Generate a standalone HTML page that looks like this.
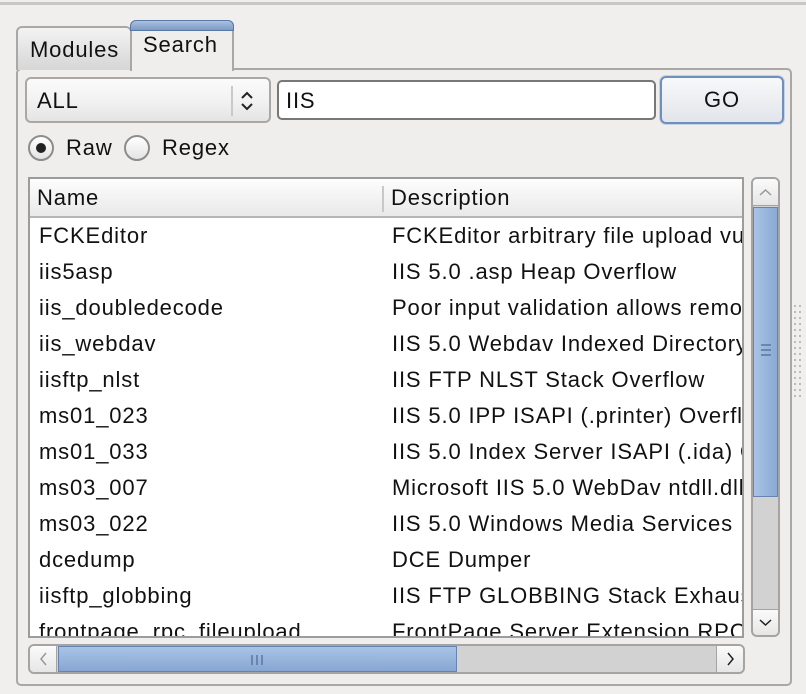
<!DOCTYPE html>
<html><head><meta charset="utf-8"><style>
*{box-sizing:border-box;margin:0;padding:0}
body{width:806px;height:694px;background:#f0efed;font-family:"Liberation Sans",sans-serif;font-size:22px;letter-spacing:0.85px;color:#111;position:relative;overflow:hidden}
.abs{position:absolute}
.topline{left:0;top:2px;width:806px;height:3px;background:#c8c7c5}
.pane{left:16px;top:68px;width:776px;height:618px;border:2px solid #a9a8a6;border-radius:5px;background:#efeeec}
.tab1{left:16px;top:26px;width:116px;height:44px;border:2px solid #a9a8a6;border-bottom:none;border-radius:6px 6px 0 0;background:linear-gradient(#f3f3f3,#d6d6d6)}
.tab1 span{position:absolute;left:12px;top:9px}
.tab2{left:130px;top:20px;width:104px;height:51px;border:2px solid #a9a8a6;border-top:none;border-bottom:none;border-radius:6px 6px 0 0;background:#efeeec}
.tab2:before{content:"";position:absolute;left:-2px;right:-2px;top:0;height:9px;border-radius:6px 6px 0 0;background:linear-gradient(#a9c2e2,#7e9ac2);border:1px solid #5a78a6}
.tab2 span{position:absolute;left:11px;top:12px}
.combo{left:25px;top:77px;width:246px;height:46px;border:2px solid #a9a8a6;border-radius:6px;background:linear-gradient(#fbfbfb 0%,#f2f2f2 50%,#e4e4e4 100%)}
.combo span{position:absolute;left:10px;top:9px}
.combo .sep{position:absolute;left:204px;top:7px;width:2px;height:30px;background:#c9c9c9}
.input{left:277px;top:80px;width:379px;height:40px;border:2px solid #777;border-radius:5px;background:#fff}
.input span{position:absolute;left:7px;top:6px}
.go{left:660px;top:76px;width:124px;height:48px;border:2px solid #6f8fbd;border-radius:6px;background:linear-gradient(#f7f8fa,#e2e5ea);box-shadow:0 0 0 1px #c3d2e6}
.go span{position:absolute;left:0;right:0;top:9px;text-align:center}
.radio{width:26px;height:26px;border-radius:50%;border:2px solid #8c8c8c;background:linear-gradient(#fff,#e4e4e4)}
.dot{position:absolute;left:6px;top:6px;width:10px;height:10px;border-radius:50%;background:#222}
.table{left:28px;top:177px;width:716px;height:461px;border:2px solid #9d9c9a;background:#fff;overflow:hidden}
.hdr{position:absolute;left:0;top:0;width:100%;height:39px;background:linear-gradient(#fdfdfd,#e9e9e9);border-bottom:2px solid #b5b5b5}
.hdr span{position:absolute;top:6px}
.hsep{position:absolute;left:352px;top:7px;width:2px;height:26px;background:#c8c8c8}
.row{position:absolute;left:0;height:36px;width:100%;white-space:nowrap}
.row .n{position:absolute;left:9px;top:4px}
.row .d{position:absolute;left:362px;top:4px}
.vs{left:751px;top:177px;width:29px;height:460px;border:2px solid #a5a4a2;border-radius:6px;background:#d2d2d2;overflow:hidden}
.vthumb{position:absolute;left:0;top:28px;width:25px;height:290px;background:linear-gradient(90deg,#a8c3e6,#8aaad4);border:1px solid #6784b0}
.hs{left:28px;top:644px;width:717px;height:30px;border:2px solid #a5a4a2;border-radius:6px;background:#d2d2d2;overflow:hidden}
.hthumb{position:absolute;left:28px;top:0;width:399px;height:26px;background:linear-gradient(#a8c3e6,#87a6d2);border:1px solid #6784b0}
.btn{position:absolute;background:linear-gradient(#fafafa,#e6e6e6)}
</style></head><body>
<div class="abs topline"></div>
<div class="abs pane"></div>
<div class="abs tab1"><span>Modules</span></div>
<div class="abs tab2"><span>Search</span></div>
<div class="abs combo"><span>ALL</span><div class="sep"></div>
<svg style="position:absolute;left:212px;top:9px" width="16" height="26" viewBox="0 0 16 26"><path d="M3 10 L8 5 L13 10 M3 16 L8 21 L13 16" fill="none" stroke="#222" stroke-width="2"/></svg></div>
<div class="abs input"><span>IIS</span></div>
<div class="abs go"><span>GO</span></div>
<div class="abs radio" style="left:28px;top:135px"><div class="dot"></div></div>
<span class="abs" style="left:66px;top:135px">Raw</span>
<div class="abs radio" style="left:124px;top:135px"></div>
<span class="abs" style="left:162px;top:135px">Regex</span>
<div class="abs table">
<div class="hdr"><span style="left:7px">Name</span><div class="hsep"></div><span style="left:361px">Description</span></div>
<div class="row" style="top:40px"><span class="n">FCKEditor</span><span class="d">FCKEditor arbitrary file upload vulnerability</span></div>
<div class="row" style="top:76px"><span class="n">iis5asp</span><span class="d">IIS 5.0 .asp Heap Overflow</span></div>
<div class="row" style="top:112px"><span class="n">iis_doubledecode</span><span class="d">Poor input validation allows remote</span></div>
<div class="row" style="top:148px"><span class="n">iis_webdav</span><span class="d">IIS 5.0 Webdav Indexed Directory</span></div>
<div class="row" style="top:184px"><span class="n">iisftp_nlst</span><span class="d">IIS FTP NLST Stack Overflow</span></div>
<div class="row" style="top:220px"><span class="n">ms01_023</span><span class="d">IIS 5.0 IPP ISAPI (.printer) Overflow</span></div>
<div class="row" style="top:256px"><span class="n">ms01_033</span><span class="d">IIS 5.0 Index Server ISAPI (.ida) Overflow</span></div>
<div class="row" style="top:292px"><span class="n">ms03_007</span><span class="d">Microsoft IIS 5.0 WebDav ntdll.dll</span></div>
<div class="row" style="top:328px"><span class="n">ms03_022</span><span class="d">IIS 5.0 Windows Media Services</span></div>
<div class="row" style="top:364px"><span class="n">dcedump</span><span class="d">DCE Dumper</span></div>
<div class="row" style="top:400px"><span class="n">iisftp_globbing</span><span class="d">IIS FTP GLOBBING Stack Exhaustion</span></div>
<div class="row" style="top:436px"><span class="n">frontpage_rpc_fileupload</span><span class="d">FrontPage Server Extension RPC</span></div>
</div>
<div class="abs vs">
<div class="btn" style="left:0;top:0;width:25px;height:27px;border-bottom:1px solid #a5a4a2"><svg width="25" height="27"><path d="M7 16 L12.5 11 L18 16" fill="none" stroke="#999" stroke-width="1.5"/></svg></div>
<div class="vthumb"><svg style="position:absolute;left:6px;top:134px" width="12" height="16"><path d="M1 3H11M1 8H11M1 13H11" stroke="#5a76a2" stroke-width="1.5"/></svg></div>
<div class="btn" style="left:0;top:430px;width:25px;height:26px;border-top:1px solid #a5a4a2"><svg width="25" height="26"><path d="M7 10 L12.5 15 L18 10" fill="none" stroke="#222" stroke-width="1.5"/></svg></div>
</div>
<div class="abs hs">
<div class="btn" style="left:0;top:0;width:27px;height:26px;border-right:1px solid #a5a4a2"><svg width="27" height="26"><path d="M16 7 L11 13 L16 19" fill="none" stroke="#999" stroke-width="1.5"/></svg></div>
<div class="hthumb"><svg style="position:absolute;left:191px;top:7px" width="14" height="12"><path d="M2 1V11M7 1V11M12 1V11" stroke="#5a76a2" stroke-width="1.5"/></svg></div>
<div class="btn" style="left:686px;top:0;width:27px;height:26px;border-left:1px solid #a5a4a2"><svg width="27" height="26"><path d="M11 7 L16 13 L11 19" fill="none" stroke="#222" stroke-width="1.5"/></svg></div>
</div>
<svg class="abs" style="left:793px;top:305px" width="12" height="95"><g fill="#bbb">
<rect x="1" y="0" width="2" height="2"/><rect x="6" y="0" width="2" height="2"/>
<rect x="1" y="6" width="2" height="2"/><rect x="6" y="6" width="2" height="2"/>
<rect x="1" y="12" width="2" height="2"/><rect x="6" y="12" width="2" height="2"/>
<rect x="1" y="18" width="2" height="2"/><rect x="6" y="18" width="2" height="2"/>
<rect x="1" y="24" width="2" height="2"/><rect x="6" y="24" width="2" height="2"/>
<rect x="1" y="30" width="2" height="2"/><rect x="6" y="30" width="2" height="2"/>
<rect x="1" y="36" width="2" height="2"/><rect x="6" y="36" width="2" height="2"/>
<rect x="1" y="42" width="2" height="2"/><rect x="6" y="42" width="2" height="2"/>
<rect x="1" y="48" width="2" height="2"/><rect x="6" y="48" width="2" height="2"/>
<rect x="1" y="54" width="2" height="2"/><rect x="6" y="54" width="2" height="2"/>
<rect x="1" y="60" width="2" height="2"/><rect x="6" y="60" width="2" height="2"/>
<rect x="1" y="66" width="2" height="2"/><rect x="6" y="66" width="2" height="2"/>
<rect x="1" y="72" width="2" height="2"/><rect x="6" y="72" width="2" height="2"/>
<rect x="1" y="78" width="2" height="2"/><rect x="6" y="78" width="2" height="2"/>
<rect x="1" y="84" width="2" height="2"/><rect x="6" y="84" width="2" height="2"/>
<rect x="1" y="90" width="2" height="2"/><rect x="6" y="90" width="2" height="2"/>
</g></svg>
</body></html>
